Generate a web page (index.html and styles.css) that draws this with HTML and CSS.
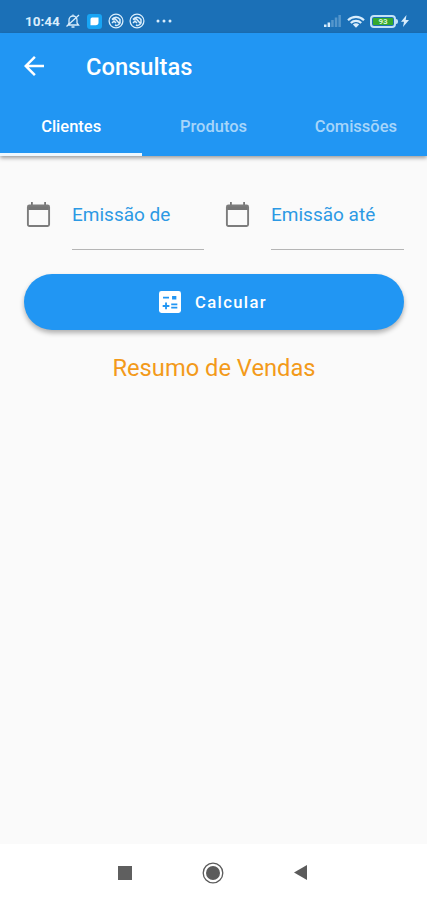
FILE: index.html
```html
<!DOCTYPE html>
<html lang="pt-BR">
<head>
<meta charset="utf-8">
<meta name="viewport" content="width=device-width">
<title>Consultas</title>
<link rel="stylesheet" href="styles.css">
</head>
<body>
<div class="screen">
  <div class="status">
    <span class="clock">10:44</span>
    <svg class="i-bell" width="16" height="16" viewBox="0 0 16 16" fill="none" stroke="currentColor" stroke-width="1.3"><path d="M3 12h10.500l-1.500-2V7a4 4 0 0 0-8 0v3z M8 3V1.500 M6.500 14h3 M1.500 13.500L14 2"/></svg>
    <svg class="i-app" width="15" height="15" viewBox="0 0 15 15"><rect width="15" height="15" rx="3" fill="#18a5f5"/><path d="M5.200 3.500h6.300v5a2.800 2.800 0 0 1-2.800 2.800H3.500V5.200A1.700 1.700 0 0 1 5.200 3.500z" fill="#fff"/></svg>
    <svg class="i-ring" width="16" height="16" viewBox="0 0 16 16" fill="none" stroke="currentColor" stroke-width="1.300"><circle cx="8" cy="8" r="6.900"/><path d="M4 6.500c2-3 6-3 8 0v3.500c-1 2-3 3-5 2 M4 6.500l3-.8 5 5.300 M4 10l2-2 2 2" stroke-width="1.500"/></svg>
    <svg class="i-ring" width="16" height="16" viewBox="0 0 16 16" fill="none" stroke="currentColor" stroke-width="1.300"><circle cx="8" cy="8" r="6.900"/><path d="M4 6.500c2-3 6-3 8 0v3.500c-1 2-3 3-5 2 M4 6.500l3-.8 5 5.300 M4 10l2-2 2 2" stroke-width="1.500"/></svg>
    <svg class="i-more" width="16" height="4" viewBox="0 0 16 4" fill="currentColor"><circle cx="2" cy="2" r="1.500"/><circle cx="8" cy="2" r="1.500"/><circle cx="14" cy="2" r="1.500"/></svg>
    <span class="grow"></span>
    <svg class="i-signal" width="17" height="12" viewBox="0 0 17 12" fill="currentColor"><rect y="9.500" width="2.500" height="2.500"/><rect x="3.600" y="7.500" width="2.500" height="4.500"/><g opacity=".3"><rect x="7.200" y="5" width="2.500" height="7"/><rect x="10.800" y="2.500" width="2.500" height="9.500"/><rect x="14.400" width="2.500" height="12"/></g></svg>
    <svg class="i-wifi" width="18" height="13" viewBox="0 0 18 13" fill="none" stroke="currentColor" stroke-width="2.200"><path d="M1 5.200a11.500 11.500 0 0 1 16 0 M3.800 8a7.500 7.500 0 0 1 10.400 0"/><path d="M9 12.700L5.800 9.600a4.800 4.800 0 0 1 6.400 0z" fill="currentColor" stroke="none"/></svg>
    <div class="battery"><span>93</span></div>
    <svg class="i-bolt" width="8" height="12" viewBox="0 0 8 12" fill="currentColor"><path d="M5.500 0L0 6.800h3L2 12l6-7H4.700z"/></svg>
  </div>
  <header class="appbar">
    <div class="titlebar">
      <svg class="back" width="20" height="20" viewBox="4 4 16 16" fill="#fff"><path d="M20 11H7.830l5.590-5.590L12 4l-8 8 8 8 1.410-1.410L7.830 13H20z"/></svg>
      <h1>Consultas</h1>
    </div>
    <nav class="tabs">
      <a class="tab active">Clientes</a>
      <a class="tab">Produtos</a>
      <a class="tab">Comissões</a>
    </nav>
  </header>
  <main>
    <div class="fields">
      <div class="field">
        <svg class="cal" width="25" height="27" viewBox="0 0 25 27"><path d="M2 4h21v5H2z M5 1h1.800v4H5z M18.200 1H20v4h-1.800z" fill="#767676"/><rect x="1.900" y="4.500" width="21.200" height="20.500" rx="1.500" fill="none" stroke="#7c7c7c" stroke-width="1.900"/></svg>
        <div class="input">Emissão de</div>
      </div>
      <div class="field">
        <svg class="cal" width="25" height="27" viewBox="0 0 25 27"><path d="M2 4h21v5H2z M5 1h1.800v4H5z M18.200 1H20v4h-1.800z" fill="#767676"/><rect x="1.900" y="4.500" width="21.200" height="20.500" rx="1.500" fill="none" stroke="#7c7c7c" stroke-width="1.900"/></svg>
        <div class="input">Emissão até</div>
      </div>
    </div>
    <button class="calc" type="button">
      <svg width="22" height="22" viewBox="3 3 18 18"><rect x="3" y="3" width="18" height="18" rx="2" fill="#fff"/><g fill="#2196f3"><path d="M6.300 7.700h4.900v1.500H6.300z M13.700 7h3.500v3h-3.500z M13 13.200h5v1.500h-5z M13 15.800h5v1.500h-5z M8 18h1.500v-2h2v-1.500h-2v-2H8v2H6V16h2z"/></g></svg>
      <span>Calcular</span>
    </button>
    <h2>Resumo de Vendas</h2>
  </main>
  <div class="navbar">
    <svg width="14" height="14" viewBox="0 0 14 14"><rect width="14" height="14" fill="#5f5f5f"/></svg>
    <svg width="22" height="22" viewBox="0 0 22 22"><circle cx="11" cy="11" r="9.800" fill="none" stroke="#5b5b5b" stroke-width="1.300"/><circle cx="11" cy="11" r="7" fill="#5b5b5b"/></svg>
    <svg width="13" height="15" viewBox="0 0 13 15"><path d="M0 7.500L13 0v15z" fill="#5b5b5b"/></svg>
  </div>
</div>
</body>
</html>
```
FILE: styles.css
```css
* { box-sizing: border-box; }
body { margin: 0; font-family: Roboto, "Liberation Sans", sans-serif; }
.screen { width: 427px; height: 900px; display: flex; flex-direction: column; background: #fafafa; overflow: hidden; }
h1, h2 { margin: 0; }

.status { height: 33px; flex: none; background: #1b70b7; color: #d9edfc; display: flex; align-items: center; padding: 9px 18px 0 25px; }
.clock { font-size: 13.500px; font-weight: 700; width: 35px; line-height: 16px; white-space: nowrap; }
.i-bell { margin-left: 5px; }
.i-app { margin-left: 6px; }
.i-ring { margin-left: 6px; }
.i-ring + .i-ring { margin-left: 5px; }
.i-more { margin-left: 11px; }
.grow { flex: 1; }
.i-wifi { margin-left: 6px; }
.battery { position: relative; margin-left: 5px; width: 26px; height: 13px; border: 2px solid #c3e2f8; border-radius: 4px; padding: 1px; }
.battery::after { content: ""; position: absolute; right: -4px; top: 2px; width: 2px; height: 5px; background: #c3e2f8; border-radius: 0 2px 2px 0; }
.battery span { display: block; height: 7px; line-height: 7px; background: #35a92e; color: #d5f5d0; font-size: 8px; font-weight: 700; text-align: center; }
.i-bolt { margin-left: 5px; }

.appbar { height: 123px; flex: none; background: #2196f3; color: #fff; box-shadow: 0 2px 4px rgba(0,0,0,.38); position: relative; display: flex; flex-direction: column; }
.titlebar { height: 66px; display: flex; align-items: center; padding-left: 24px; }
.back { margin-right: 42px; }
h1 { font-size: 23.700px; font-weight: 500; line-height: 28px; padding-top: 2px; }
.tabs { flex: 1; display: grid; grid-template-columns: repeat(3, 1fr); }
.tab { display: flex; align-items: center; justify-content: center; font-size: 16.500px; font-weight: 500; color: #a6d5fa; border-bottom: 3px solid transparent; }
.tab.active { color: #fff; border-bottom-color: #edf7fe; }

main { flex: 1; padding: 43px 23px 0 24px; }
.fields { display: grid; grid-template-columns: 180px 180px; column-gap: 19px; }
.field { display: flex; }
.field + .field .input { margin-right: -1px; }
.cal { flex: none; margin: 2px 21px 0 2px; }
.input { flex: 1; height: 51px; border-bottom: 1px solid #b5b5b5; color: #2c99e4; font-size: 19px; line-height: 31px; white-space: nowrap; }
.calc { margin-top: 24px; width: 380px; height: 56px; border: 0; border-radius: 28px; background: #2196f3; color: #fff; box-shadow: 0 3px 5px rgba(0,0,0,.3); display: flex; align-items: center; justify-content: center; gap: 14px; padding: 0 8px 0 6px; font: 500 16.600px Roboto, sans-serif; letter-spacing: 1.400px; }
h2 { margin-top: 24px; text-align: center; font-size: 23.700px; line-height: 29px; font-weight: 400; color: #f39a1a; }

.navbar { height: 56px; flex: none; background: #fff; display: flex; align-items: center; justify-content: space-between; padding: 1px 120px 0 118px; }
```
